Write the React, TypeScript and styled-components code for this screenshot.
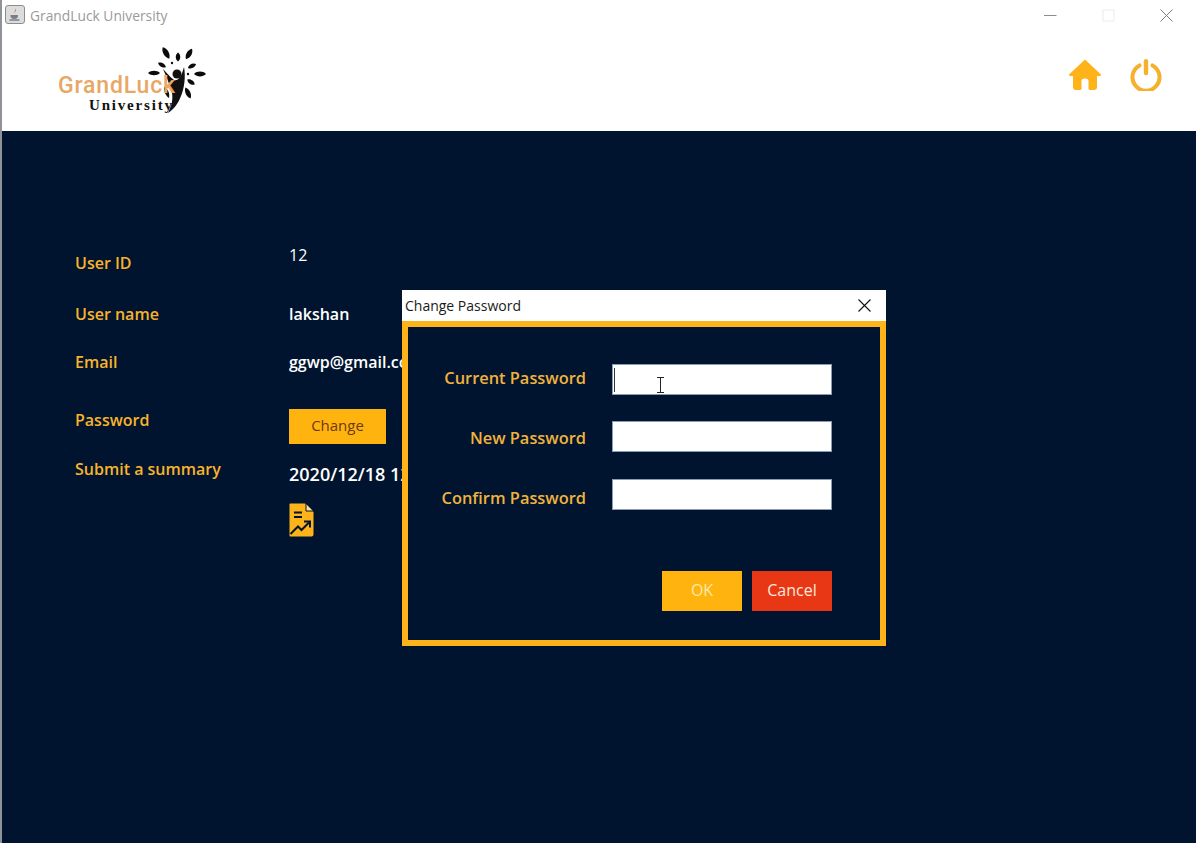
import React from "react";
import styled, { createGlobalStyle } from "styled-components";

const Global = createGlobalStyle`
  html, body { margin: 0; padding: 0; background: #fff; }
  body { font-family: "Open Sans", "Noto Sans", "Liberation Sans", sans-serif; }
`;

const Win = styled.div`
  position: relative;
  width: 1196px;
  height: 843px;
  overflow: hidden;
  display: flex;
  flex-direction: column;
  border-left: 2px solid #8f9296;
  box-sizing: border-box;
  background: #fff;
`;

const TitleBar = styled.div`
  height: 31px;
  display: flex;
  align-items: center;
  padding: 0 0 2px 3px;
  gap: 5px;
  flex: none;
  box-sizing: border-box;
`;

const AppName = styled.span`
  font-size: 13.8px;
  color: #9a9a9a;
  position: relative;
  top: 1px;
`;

const WinControls = styled.div`
  margin-left: auto;
  display: flex;
  align-items: center;
  padding: 2px 23px 0 0;
  gap: 45px;
`;

const Header = styled.div`
  height: 100px;
  flex: none;
  display: flex;
  align-items: flex-start;
  padding-left: 48px;
  padding-right: 34px;
  padding-top: 12px;
  box-sizing: border-box;
`;

const HeaderIcons = styled.div`
  margin-left: auto;
  display: flex;
  gap: 29px;
  padding-top: 16px;
`;

const Body = styled.div`
  flex: 1;
  background: #00142f;
  padding: 113px 0 0 73px;
  box-sizing: border-box;
`;

const Grid = styled.div`
  display: grid;
  grid-template-columns: 214px auto;
  width: 330px;
`;

const Label = styled.div<{ $h: number; $pt: number }>`
  height: ${(p) => p.$h}px;
  padding-top: ${(p) => p.$pt}px;
  box-sizing: border-box;
  font-size: 16px;
  font-weight: 600;
  line-height: 22px;
  color: #f8b32a;
  white-space: nowrap;
`;

const Value = styled.div<{ $pt: number; $thin?: boolean; $size?: number }>`
  padding-top: ${(p) => p.$pt}px;
  font-size: ${(p) => p.$size ?? 16}px;
  font-weight: ${(p) => (p.$thin ? 400 : 600)};
  line-height: 22px;
  color: #fff;
  white-space: nowrap;
`;

const ChangeBtn = styled.div`
  width: 97px;
  height: 35px;
  padding-bottom: 3px;
  box-sizing: border-box;
  background: #ffb30f;
  color: #6d3a10;
  font-size: 15px;
  font-weight: 400;
  display: flex;
  align-items: center;
  justify-content: center;
`;

const SummaryIcon = styled.svg`
  display: block;
  margin-top: 18px;
`;

const Dialog = styled.div`
  position: absolute;
  left: 400px;
  top: 290px;
  width: 484px;
  height: 356px;
  display: flex;
  flex-direction: column;
`;

const DialogTitle = styled.div`
  height: 31px;
  flex: none;
  background: #fff;
  display: flex;
  align-items: center;
  justify-content: space-between;
  padding: 0 15px 0 3px;
  font-size: 14px;
  color: #1a1a1a;
`;

const DialogBody = styled.div`
  flex: 1;
  border: 6px solid #ffb31a;
  background: #00142f;
  box-sizing: border-box;
  padding: 37px 48px 0 0;
  display: flex;
  flex-direction: column;
`;

const FieldRow = styled.div<{ $mb: number }>`
  display: flex;
  justify-content: flex-end;
  align-items: center;
  gap: 26px;
  height: 31px;
  margin-bottom: ${(p) => p.$mb}px;
`;

const FieldLabel = styled.span<{ $shift: number }>`
  font-size: 16.4px;
  font-weight: 600;
  color: #f0b23c;
  white-space: nowrap;
  position: relative;
  top: ${(p) => p.$shift}px;
`;

const Field = styled.div`
  position: relative;
  width: 220px;
  height: 31px;
  box-sizing: border-box;
  background: #fff;
  border: 1px solid #8a9bb5;
`;

const Caret = styled.span`
  position: absolute;
  left: 1px;
  top: 3px;
  width: 1px;
  height: 24px;
  background: #333;
`;

const Cursor = styled.svg`
  position: absolute;
  left: 43px;
  top: 12px;
`;

const Buttons = styled.div`
  display: flex;
  justify-content: flex-end;
  gap: 10px;
  margin-top: 61px;
`;

const DlgBtn = styled.div<{ $bg: string; $fg: string }>`
  width: 80px;
  height: 40px;
  padding-bottom: 2px;
  box-sizing: border-box;
  background: ${(p) => p.$bg};
  color: ${(p) => p.$fg};
  font-size: 16px;
  display: flex;
  align-items: center;
  justify-content: center;
`;

const Leaf = ({ x, y, r, l = 8, w = 3.2 }: { x: number; y: number; r: number; l?: number; w?: number }) => (
  <path
    transform={`translate(${x} ${y}) rotate(${r})`}
    d={`M0 ${-l}C${w} ${-l / 2} ${w} ${l / 2} 0 ${l}C${-w} ${l / 2} ${-w} ${-l / 2} 0 ${-l}Z`}
    fill="#0b0b0b"
  />
);

const Logo = () => (
  <svg width="170" height="80" viewBox="0 0 170 80">
    <Leaf x={116} y={10} r={-30} l={6.5} w={3.6} />
    <Leaf x={128} y={14} r={0} l={4.5} w={3} />
    <Leaf x={139} y={11} r={30} l={6} w={3.4} />
    <Leaf x={142} y={23} r={65} l={4.5} w={2.8} />
    <Leaf x={150} y={31} r={90} l={6} w={3.2} />
    <Leaf x={141} y={39} r={125} l={4.5} w={2.8} />
    <Leaf x={138} y={50} r={155} l={6} w={3.2} />
    <Leaf x={112} y={22} r={-60} l={4.5} w={2.6} />
    <Leaf x={104} y={30} r={90} l={6} w={3} />
    <circle cx="122" cy="20" r="1.2" fill="#111" />
    <circle cx="138" cy="31" r="1.2" fill="#111" />
    <circle cx="127" cy="31" r="4.5" fill="#111" />
    <path d="M113 26C117 30 121 35 124 37C128 38 131 35 134 24C136 34 134 46 131 53C128 61 124 66 118 70C122 62 123 56 122 50C120 42 116 33 113 26Z" fill="#111" />
    <path d="M114 44C118 46 120 50 119 55C116 53 114 49 114 44Z" fill="#111" />
    <text x="8" y="50" fontFamily="Roboto,'Liberation Sans',sans-serif" fontSize="23" fontWeight="500" fill="#e9a766" textLength="117" lengthAdjust="spacing">
      GrandLuck
    </text>
    <text x="39" y="67" fontFamily="'Liberation Serif',serif" fontWeight="700" fontSize="15" fill="#111" textLength="83" lengthAdjust="spacing">
      University
    </text>
  </svg>
);

export default function App() {
  return (
    <Win>
      <Global />
      <TitleBar>
        <svg width="20" height="19" viewBox="0 0 20 19">
          <rect x="0.5" y="0.5" width="19" height="18" rx="2.5" fill="#dcdcdc" stroke="#8c8c8c" />
          <path d="M10.5 3C11.5 5 8.5 6 10 8.5C9.3 6.5 12.3 5.8 10.5 3Z" fill="#d9622b" />
          <path d="M5.5 10H13V11C13 13 11.5 14 9.3 14C7 14 5.5 13 5.5 11Z" fill="#7a7f86" />
          <path d="M4.5 15H14.5" stroke="#6b7280" strokeWidth="1.3" />
        </svg>
        <AppName>GrandLuck University</AppName>
        <WinControls>
          <svg width="13" height="13" viewBox="0 0 13 13">
            <path d="M0 6.5H12.5" stroke="#8d8d8d" strokeWidth="1" />
          </svg>
          <svg width="13" height="13" viewBox="0 0 13 13">
            <rect x="1" y="1" width="11" height="11" fill="none" stroke="#ececec" strokeWidth="1" />
          </svg>
          <svg width="13" height="13" viewBox="0 0 13 13">
            <path d="M0.5 0.5L12.5 12.5M12.5 0.5L0.5 12.5" stroke="#7c7c7c" strokeWidth="1" />
          </svg>
        </WinControls>
      </TitleBar>
      <Header>
        <Logo />
        <HeaderIcons>
          <svg width="32" height="32" viewBox="0 0 32 32">
            <path
              d="M16 .5L32 15.5C32 16.6 31 17 30 17H28V28C28 29.7 27 31 25 31H21C20 31 19.5 30.4 19.5 29.5V22C19.5 20.5 18.5 19.5 16 19.5C13.5 19.5 12.5 20.5 12.5 22V29.5C12.5 30.4 12 31 11 31H7C5 31 4 29.7 4 28V17H2C1 17 0 16.6 0 15.5Z"
              fill="#ffb31a"
            />
          </svg>
          <svg width="32" height="32" viewBox="0 0 32 32">
            <path d="M9.5 6.4A13.5 13.5 0 1 0 22.5 6.4" fill="none" stroke="#f6b12c" strokeWidth="4" strokeLinecap="round" />
            <path d="M16 2.2V14" stroke="#f6b12c" strokeWidth="4.4" strokeLinecap="round" />
          </svg>
        </HeaderIcons>
      </Header>
      <Body>
        <Grid>
          <Label $h={59} $pt={8}>User ID</Label>
          <Value $pt={0} $thin>12</Value>
          <Label $h={48} $pt={0}>User name</Label>
          <Value $pt={0}>lakshan</Value>
          <Label $h={47} $pt={0}>Email</Label>
          <Value $pt={0}>ggwp@gmail.com</Value>
          <Label $h={60} $pt={11}>Password</Label>
          <Value $pt={11}><ChangeBtn>Change</ChangeBtn></Value>
          <Label $h={60} $pt={0}>Submit a summary</Label>
          <Value $pt={5} $size={18}>
            2020/12/18 12:00
            <SummaryIcon width="25" height="34" viewBox="0 0 25 34">
              <path d="M1.5 0.5H16L24.5 9V31.5C24.5 32.6 23.6 33.5 22.5 33.5H1.5C0.9 33.5 0.5 33 0.5 32.5V1.5C0.5 1 0.9 .5 1.5 .5Z" fill="#ffb31a" />
              <path d="M17 1V8H24" fill="#ffe0a0" stroke="#00142f" strokeWidth="1" />
              <path d="M5 9.5H13M5 14H13" stroke="#00142f" strokeWidth="2" />
              <path d="M1.5 31L9 23.5L12.5 27L20 19.5" fill="none" stroke="#00142f" strokeWidth="2" />
              <path d="M15 18.5H21V24.5" fill="none" stroke="#00142f" strokeWidth="2" />
            </SummaryIcon>
          </Value>
        </Grid>
      </Body>
      <Dialog>
        <DialogTitle>
          Change Password
          <svg width="13" height="13" viewBox="0 0 13 13">
            <path d="M0.5 0.5L12.5 12.5M12.5 0.5L0.5 12.5" stroke="#111" strokeWidth="1.1" />
          </svg>
        </DialogTitle>
        <DialogBody>
          <FieldRow $mb={26}>
            <FieldLabel $shift={-2}>Current Password</FieldLabel>
            <Field>
              <Caret />
              <Cursor width="9" height="16" viewBox="0 0 9 16">
                <path d="M1 .5H8M1 15.5H8M4.5 .5V15.5" fill="none" stroke="#222" strokeWidth="1" />
              </Cursor>
            </Field>
          </FieldRow>
          <FieldRow $mb={27}>
            <FieldLabel $shift={1}>New Password</FieldLabel>
            <Field />
          </FieldRow>
          <FieldRow $mb={0}>
            <FieldLabel $shift={3}>Confirm Password</FieldLabel>
            <Field />
          </FieldRow>
          <Buttons>
            <DlgBtn $bg="#ffb30f" $fg="#ffe9a8">OK</DlgBtn>
            <DlgBtn $bg="#e83714" $fg="#ffe8dc">Cancel</DlgBtn>
          </Buttons>
        </DialogBody>
      </Dialog>
    </Win>
  );
}
